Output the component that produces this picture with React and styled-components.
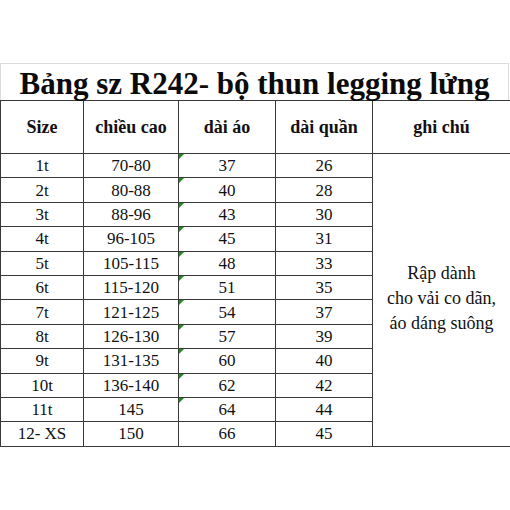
import React from 'react'
import styled, { createGlobalStyle } from 'styled-components'

const GlobalStyle = createGlobalStyle`
  html, body {
    margin: 0;
    padding: 0;
    background: #ffffff;
  }
  body {
    font-family: "Liberation Serif", "Times New Roman", serif;
    color: #111;
  }
`

const Page = styled.div`
  width: 510px;
  height: 510px;
  padding-top: 63px;
  box-sizing: border-box;
  background: #fff;
`

const Title = styled.div`
  width: 509px;
  height: 37px;
  box-sizing: border-box;
  border: 1px solid #dcdcdc;
  border-bottom: none;
  display: flex;
  align-items: flex-end;
  justify-content: center;
  font-size: 31px;
  font-weight: bold;
  line-height: 1;
  white-space: nowrap;
  color: #0b0b0b;
  padding-bottom: 1px;
`

const Table = styled.table`
  width: 510px;
  border-collapse: collapse;
  table-layout: fixed;
`

const HeadCell = styled.th`
  height: 52px;
  border: 1px solid #3a3a3a;
  font-size: 18px;
  font-weight: bold;
  text-align: center;
  vertical-align: middle;
  padding: 0;
  color: #111;
`

const Cell = styled.td`
  position: relative;
  height: 23.4px;
  border: 1px solid #3a3a3a;
  font-size: 17px;
  text-align: center;
  vertical-align: middle;
  padding: 0;
  line-height: 1;
  color: #111;

  ${(p) => p.$mark && `
    &::before {
      content: '';
      position: absolute;
      top: 0;
      left: 0;
      border-top: 5px solid #1f8c1f;
      border-right: 5px solid transparent;
    }
  `}
`

const NoteCell = styled.td`
  border: 1px solid #3a3a3a;
  font-size: 18px;
  line-height: 25px;
  text-align: center;
  vertical-align: middle;
  padding: 0 0 2px;
  color: #111;
`

const rows = [
  ['1t', '70-80', '37', '26'],
  ['2t', '80-88', '40', '28'],
  ['3t', '88-96', '43', '30'],
  ['4t', '96-105', '45', '31'],
  ['5t', '105-115', '48', '33'],
  ['6t', '115-120', '51', '35'],
  ['7t', '121-125', '54', '37'],
  ['8t', '126-130', '57', '39'],
  ['9t', '131-135', '60', '40'],
  ['10t', '136-140', '62', '42'],
  ['11t', '145', '64', '44'],
  ['12- XS', '150', '66', '45'],
]

const App = () => {
  return (
    <Page>
      <GlobalStyle />
      <Title>Bảng sz R242- bộ thun legging lửng</Title>
      <Table>
        <colgroup>
          <col style={{ width: 83 }} />
          <col style={{ width: 95 }} />
          <col style={{ width: 97 }} />
          <col style={{ width: 97 }} />
          <col style={{ width: 138 }} />
        </colgroup>
        <thead>
          <tr>
            <HeadCell>Size</HeadCell>
            <HeadCell>chiều cao</HeadCell>
            <HeadCell>dài áo</HeadCell>
            <HeadCell>dài quần</HeadCell>
            <HeadCell>ghi chú</HeadCell>
          </tr>
        </thead>
        <tbody>
          {rows.map((r, i) => (
            <tr key={r[0]}>
              <Cell>{r[0]}</Cell>
              <Cell>{r[1]}</Cell>
              <Cell $mark={i < 11}>{r[2]}</Cell>
              <Cell>{r[3]}</Cell>
              {i === 0 && (
                <NoteCell rowSpan={12}>
                  Rập dành
                  <br />
                  cho vải co dãn,
                  <br />
                  áo dáng suông
                </NoteCell>
              )}
            </tr>
          ))}
        </tbody>
      </Table>
    </Page>
  )
}

export default App
